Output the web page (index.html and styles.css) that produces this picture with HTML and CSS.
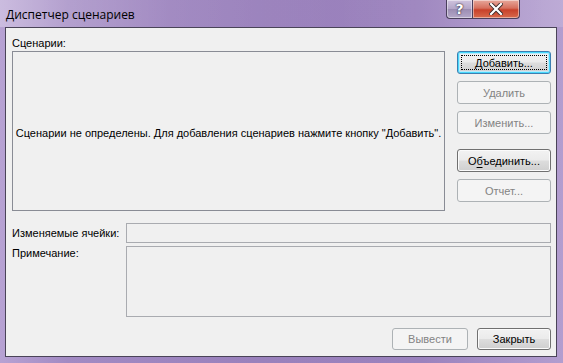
FILE: index.html
```html
<!DOCTYPE html>
<html lang="ru">
  <head>
    <meta charset="UTF-8" />
    <meta name="viewport" content="width=device-width, initial-scale=1.0" />
    <title>Диспетчер сценариев</title>
    <link rel="stylesheet" href="styles.css">
  </head>
  <body>
    <div class="window">
      <!-- Title bar -->
      <div class="titlebar">
        <span class="title">Диспетчер сценариев</span>
        <div class="caption">
          <div class="cap-btn help">?</div>
          <div class="cap-btn close">
            <svg width="14" height="12" viewBox="0 0 14 12">
              <path d="M2 1 L12 11 M12 1 L2 11" stroke="#3a2a2a" stroke-width="4" stroke-linecap="square" />
              <path d="M2 1 L12 11 M12 1 L2 11" stroke="#ffffff" stroke-width="2.2" stroke-linecap="square" />
            </svg>
          </div>
        </div>
      </div>

      <!-- Dialog body -->
      <div class="client">
        <div class="top">
          <div class="scenarios">
            <div class="label">Сценарии:</div>
            <div class="list">Сценарии не определены. Для добавления сценариев нажмите кнопку "Добавить".</div>
          </div>
          <div class="side">
            <button class="btn default"><span class="focus">Добавить...</span></button>
            <button class="btn" disabled>Удалить</button>
            <button class="btn" disabled>Изменить...</button>
            <button class="btn merge">О<u>б</u>ъединить...</button>
            <button class="btn" disabled>Отчет...</button>
          </div>
        </div>

        <div class="field">
          <div class="field-label">Изменяемые ячейки:</div>
          <div class="input"></div>
        </div>
        <div class="field note">
          <div class="field-label">Примечание:</div>
          <div class="input area"></div>
        </div>

        <div class="footer">
          <button class="btn show" disabled>Вывести</button>
          <button class="btn close-btn">Закрыть</button>
        </div>
      </div>
    </div>
  </body>
</html>
```

FILE: styles.css
```css
html, body {
  margin: 0;
  padding: 0;
}
body {
  width: 563px;
  height: 363px;
  overflow: hidden;
  font-family: "Liberation Sans", Arial, sans-serif;
  font-size: 11px;
  color: #000;
}
.window {
  width: 563px;
  height: 363px;
  box-sizing: border-box;
  display: flex;
  flex-direction: column;
  background: linear-gradient(90deg, #b7a2d3 0%, #a28ac3 12%, #9a81bc 45%, #9b82bd 75%, #b29dcf 100%);
}
.titlebar {
  height: 27px;
  flex: none;
  display: flex;
  justify-content: space-between;
  align-items: flex-start;
  padding-left: 6px;
  background: linear-gradient(90deg, rgba(255,255,255,0.28) 0%, rgba(255,255,255,0.05) 30%, rgba(255,255,255,0) 60%, rgba(255,255,255,0.15) 100%);
}
.title {
  margin-top: 6px;
  font-family: "Open Sans", "Liberation Sans", sans-serif;
  font-size: 12px;
  color: #000;
}
.caption {
  display: flex;
  margin-right: 43px;
}
.cap-btn {
  height: 18px;
  border: 1px solid #4a3f5c;
  border-top: none;
  display: flex;
  align-items: center;
  justify-content: center;
  box-shadow: inset 0 0 0 1px rgba(255,255,255,0.45);
}
.help {
  width: 25px;
  border-right: none;
  border-radius: 0 0 0 4px;
  background: linear-gradient(#cfc3de 0%, #b3a5c7 50%, #9c8db3 52%, #b4a8c8 100%);
  color: #fff;
  font-family: "DejaVu Sans", sans-serif;
  font-weight: bold;
  font-size: 14px;
  text-shadow: 0 0 2px #2a2236, 0 0 1px #2a2236;
}
.close {
  width: 46px;
  border-radius: 0 0 4px 0;
  background: linear-gradient(#e7a89c 0%, #d6705e 45%, #c8412a 55%, #d86a4c 100%);
}

.client {
  height: 330px;
  flex: none;
  box-sizing: border-box;
  margin: 0 6px 0 5px;
  border: 1px solid #4a4458;
  background: #f0f0f0;
  padding: 8px 5px 0 6px;
  display: flex;
  flex-direction: column;
  white-space: nowrap;
}
.top {
  display: flex;
  gap: 12px;
}
.scenarios {
  width: 434px;
}
.label {
  height: 15px;
  line-height: 15px;
}
.list {
  height: 160px;
  box-sizing: border-box;
  border: 1px solid #898c95;
  display: flex;
  align-items: center;
  justify-content: center;
  padding-top: 4px;
}
.side {
  display: flex;
  flex-direction: column;
  padding-top: 15px;
}
.btn {
  width: 94px;
  height: 23px;
  margin-bottom: 7px;
  padding: 0;
  border: 1px solid #707070;
  border-radius: 3px;
  background: linear-gradient(#f2f2f2 0%, #ebebeb 48%, #dddddd 52%, #cfcfcf 100%);
  box-shadow: inset 0 0 0 1px #fbfbfb;
  font-family: inherit;
  font-size: 11px;
  color: #000;
}
.btn:disabled {
  border-color: #adb2b5;
  background: #f4f4f4;
  color: #838383;
  box-shadow: none;
}
.btn.default {
  border-color: #3c7fb1;
  box-shadow: inset 0 0 0 1px #48d8fb, inset 0 0 0 2px #b7eafc;
  padding: 3px;
}
.focus {
  display: flex;
  align-items: center;
  justify-content: center;
  height: 100%;
  box-sizing: border-box;
  border: 1px dotted #000;
}
.btn.merge {
  margin-top: 8px;
}
.btn u {
  text-decoration-thickness: 1px;
  text-underline-offset: 2px;
}

.field {
  display: flex;
  margin-top: 12px;
}
.field.note {
  margin-top: 3px;
}
.field-label {
  width: 114px;
  line-height: 20px;
}
.note .field-label {
  line-height: 14px;
}
.input {
  flex: 1;
  height: 20px;
  box-sizing: border-box;
  border: 1px solid #a9abb0;
}
.input.area {
  height: 71px;
}

.footer {
  display: flex;
  justify-content: flex-end;
  gap: 9px;
  margin-top: 11px;
}
.footer .btn {
  height: 22px;
  margin-bottom: 0;
}
.footer .show {
  width: 76px;
}
.footer .close-btn {
  width: 74px;
}
```
